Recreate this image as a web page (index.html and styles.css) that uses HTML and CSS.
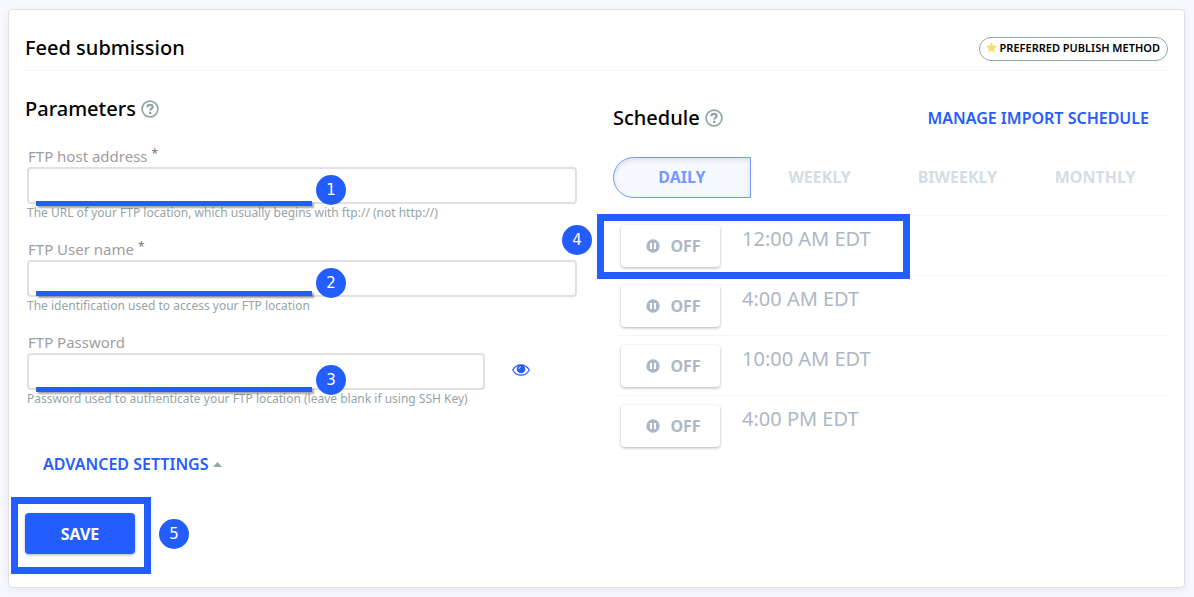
FILE: index.html
```html
<!DOCTYPE html>
<html lang="en">
<head>
<meta charset="utf-8">
<meta name="viewport" content="width=device-width, initial-scale=1">
<title>Feed submission</title>
<link rel="stylesheet" href="styles.css">
</head>
<body>
<svg class="defs" aria-hidden="true">
  <symbol id="help" viewBox="0 0 18 18">
    <circle cx="9" cy="9" r="7.9" fill="none" stroke="currentColor" stroke-width="1.7"/>
    <path d="M6.3 7.2C6.4 5.6 7.5 4.900 9 4.900s2.700.8 2.700 2.200c0 1.800-2.500 1.800-2.500 3.500" fill="none" stroke="currentColor" stroke-width="2.300"/>
    <rect x="8" y="11.700" width="2.400" height="2.300" fill="currentColor"/>
  </symbol>
  <symbol id="pause" viewBox="0 0 14 14">
    <path fill="currentColor" fill-rule="evenodd" d="M7 .3a6.700 6.700 0 1 1 0 13.400a6.700 6.700 0 0 1 0-13.400zM4 4v6h2V4zM8 4v6h2V4z"/>
  </symbol>
</svg>
<main class="card">
  <header class="card-header">
    <h1 class="title">Feed submission</h1>
    <span class="pill">
      <svg class="star" viewBox="0 0 10 10" aria-hidden="true"><path d="M5 0l1.500 3.200 3.500.5-2.500 2.400.6 3.500L5 8 1.900 9.600l.6-3.500L0 3.700l3.500-.5z"/></svg>
      PREFERRED PUBLISH METHOD
    </span>
  </header>
  <div class="columns">
    <section class="parameters">
      <h2 class="title">Parameters <svg class="help-icon" role="img" aria-label="Help"><use href="#help"/></svg></h2>
      <form class="form">
        <div class="field">
          <label class="label" for="host">FTP host address <span class="required">*</span></label>
          <div class="control">
            <input class="input" id="host" type="text">
            <span class="underline"></span><span class="marker marker-field">1</span>
          </div>
          <p class="hint">The URL of your FTP location, which usually begins with ftp:// (not http://)</p>
        </div>
        <div class="field">
          <label class="label" for="user">FTP User name <span class="required">*</span></label>
          <div class="control">
            <input class="input" id="user" type="text">
            <span class="underline underline-high"></span><span class="marker marker-field">2</span>
          </div>
          <p class="hint">The identification used to access your FTP location</p>
        </div>
        <div class="field">
          <label class="label" for="password">FTP Password</label>
          <div class="control control-split">
            <input class="input" id="password" type="password">
            <button class="reveal" type="button" aria-label="Show password">
              <svg class="eye" viewBox="0 0 18 12" aria-hidden="true"><path d="M.7 6C2.500 2.800 5.500.8 9 .8S15.500 2.800 17.300 6C15.500 9.200 12.500 11.200 9 11.200S2.500 9.200.7 6z" fill="none" stroke="currentColor" stroke-width="1.200"/><circle cx="9" cy="5" r="4.300" fill="currentColor"/><path d="M6.800 5A2.200 2.200 0 0 1 9 2.800" fill="none" stroke="#fff" stroke-width=".8"/></svg>
            </button>
            <span class="underline"></span><span class="marker marker-field marker-low">3</span>
          </div>
          <p class="hint">Password used to authenticate your FTP location (leave blank if using SSH Key)</p>
        </div>
        <a class="link advanced" href="#advanced">ADVANCED SETTINGS <svg class="caret" viewBox="0 0 9 5" aria-hidden="true"><path d="M0 5L4.500 0 9 5z"/></svg></a>
        <div class="save-row">
          <button class="save" type="submit">SAVE</button>
          <span class="frame frame-save"></span><span class="marker marker-save">5</span>
        </div>
      </form>
    </section>
    <section class="schedule">
      <div class="schedule-head">
        <h2 class="title">Schedule <svg class="help-icon" role="img" aria-label="Help"><use href="#help"/></svg></h2>
        <a class="link" href="#schedule">MANAGE IMPORT SCHEDULE</a>
      </div>
      <div class="tabs">
        <button class="tab tab-active" type="button">DAILY</button>
        <button class="tab" type="button">WEEKLY</button>
        <button class="tab" type="button">BIWEEKLY</button>
        <button class="tab" type="button">MONTHLY</button>
      </div>
      <ul class="slots">
        <li class="slot"><button class="toggle" type="button"><svg class="pause" aria-hidden="true"><use href="#pause"/></svg>OFF</button><span class="time">12:00 AM EDT</span><span class="frame frame-slot"></span><span class="marker marker-slot">4</span></li>
        <li class="slot"><button class="toggle" type="button"><svg class="pause" aria-hidden="true"><use href="#pause"/></svg>OFF</button><span class="time">4:00 AM EDT</span></li>
        <li class="slot"><button class="toggle" type="button"><svg class="pause" aria-hidden="true"><use href="#pause"/></svg>OFF</button><span class="time">10:00 AM EDT</span></li>
        <li class="slot"><button class="toggle" type="button"><svg class="pause" aria-hidden="true"><use href="#pause"/></svg>OFF</button><span class="time">4:00 PM EDT</span></li>
      </ul>
    </section>
  </div>
</main>
</body>
</html>
```

FILE: styles.css
```css
* { box-sizing: border-box; }
body {
  margin: 0;
  padding: 9px 9px 9px 8px;
  background: #f8f9ff;
  color: #000;
  font-family: "Noto Sans", "Open Sans", sans-serif;
  font-size: 15px;
}
button, input { font: inherit; }
button { cursor: pointer; }
h1, h2, p, ul { margin: 0; padding: 0; }
.defs { display: none; }

.card {
  padding: 0 16px 33px;
  border: 1px solid #e0e0e3;
  border-radius: 4px;
  background: #fff;
  box-shadow: 0 3px 8px rgba(40, 50, 90, .08);
}
.card-header {
  display: flex;
  align-items: flex-start;
  justify-content: space-between;
  height: 61px;
  padding-top: 24px;
  border-bottom: 1px solid #f5f6fd;
}
.title {
  display: flex;
  align-items: center;
  gap: 5px;
  font-size: 20px;
  font-weight: 500;
  line-height: 28px;
}
.pill {
  display: flex;
  align-items: center;
  gap: 3px;
  height: 24px;
  margin-top: 3px;
  padding: 0 7px 3px 6px;
  border: 1px solid #95a5a6;
  border-radius: 12px;
  font-size: 11px;
  font-weight: 600;
}
.star { width: 11px; height: 11px; fill: #f7dc6f; }
.help-icon { width: 18px; height: 18px; color: #95a5a6; }

.columns { display: grid; grid-template-columns: 1fr 1fr; gap: 33px; }
.parameters { padding-top: 24px; }
.schedule { padding-top: 33px; }

.form { padding: 22px 3px 0 2px; }
.field { margin-bottom: 16px; }
.label { display: block; padding-left: 1px; color: #9e9e9e; line-height: 22px; }
.required { color: #757575; font-size: 12px; line-height: 12px; vertical-align: 4px; }
.control { position: relative; }
.control-split { display: grid; grid-template-columns: 5fr 1fr; }
.input {
  display: block;
  width: 100%;
  height: 37px;
  padding: 0 10px;
  border: 2px solid #e0e0e0;
  border-radius: 4px;
  background: #fff;
}
.hint { color: #95a5a6; font-size: 12px; line-height: 18px; }
.reveal { display: flex; align-items: center; padding: 0 0 3px 27px; border: 0; background: none; color: #245dfe; }
.eye { width: 18px; height: 12px; }

.link {
  color: #245dfe;
  font-size: 16px;
  font-weight: 600;
  line-height: 24px;
  text-decoration: none;
}
.advanced { display: inline-flex; align-items: center; gap: 4px; margin: 28px 0 37px 16px; }
.caret { width: 9px; height: 5px; fill: #95a5a6; }
.save-row { display: flex; position: relative; margin-left: -2px; }
.save {
  width: 110px;
  height: 41px;
  padding: 0;
  border: 0;
  border-radius: 4px;
  background: #245dfe;
  box-shadow: 0 1px 3px rgba(0, 0, 0, .3);
  color: #fff;
  font-size: 16px;
  font-weight: 700;
}

.schedule-head { display: flex; justify-content: space-between; align-items: center; padding-right: 19px; }
.tabs { display: grid; grid-template-columns: repeat(4, 1fr); margin: 25px 4px 17px 0; }
.tab {
  height: 41px;
  padding: 0 0 1px;
  border: 1px solid transparent;
  background: none;
  color: #d5dde2;
  font-size: 16px;
  font-weight: 700;
}
.tab-active {
  border-color: #7499ff;
  border-radius: 21px 0 0 21px;
  background: #f6f9ff;
  box-shadow: inset 0 2px 5px rgba(0, 0, 0, .12);
  color: #7499ff;
}
.slots { list-style: none; }
.slot {
  display: flex;
  gap: 22px;
  align-items: flex-start;
  position: relative;
  height: 60px;
  padding: 9px 0 0 8px;
  border-top: 1px solid #f7f7f7;
}
.toggle {
  display: flex;
  align-items: center;
  justify-content: center;
  gap: 10px;
  width: 99px;
  height: 42px;
  padding: 0 0 1px 6px;
  border: 0;
  border-radius: 4px;
  background: #fff;
  box-shadow: 0 1px 3px rgba(0, 0, 0, .3);
  color: #adb8c6;
  font-size: 16px;
  font-weight: 700;
}
.pause { width: 14px; height: 14px; }
.time { color: #adb8c6; font-size: 20px; line-height: 28px; }

.underline {
  position: absolute;
  left: 9px;
  bottom: -2px;
  width: 276px;
  height: 5px;
  background: #245dfe;
  box-shadow: 2px 2px 2px rgba(0, 0, 0, .35);
}
.underline-high { bottom: 1px; }
.marker {
  display: flex;
  align-items: center;
  justify-content: center;
  position: absolute;
  width: 30px;
  height: 30px;
  border-radius: 50%;
  background: #245dfe;
  color: #fff;
  font-family: "DejaVu Sans", sans-serif;
  font-size: 15px;
}
.marker-field { left: 289px; top: 8px; }
.marker-low { top: 12px; }
.marker-slot { left: -51px; top: 9px; }
.marker-save { left: 134px; top: 6px; }
.frame { position: absolute; z-index: 1; border: 7px solid #245dfe; pointer-events: none; }
.frame-slot { left: -16px; top: -2px; width: 313px; height: 65px; }
.frame-save { left: -14px; top: -16px; width: 140px; height: 77px; }
```
